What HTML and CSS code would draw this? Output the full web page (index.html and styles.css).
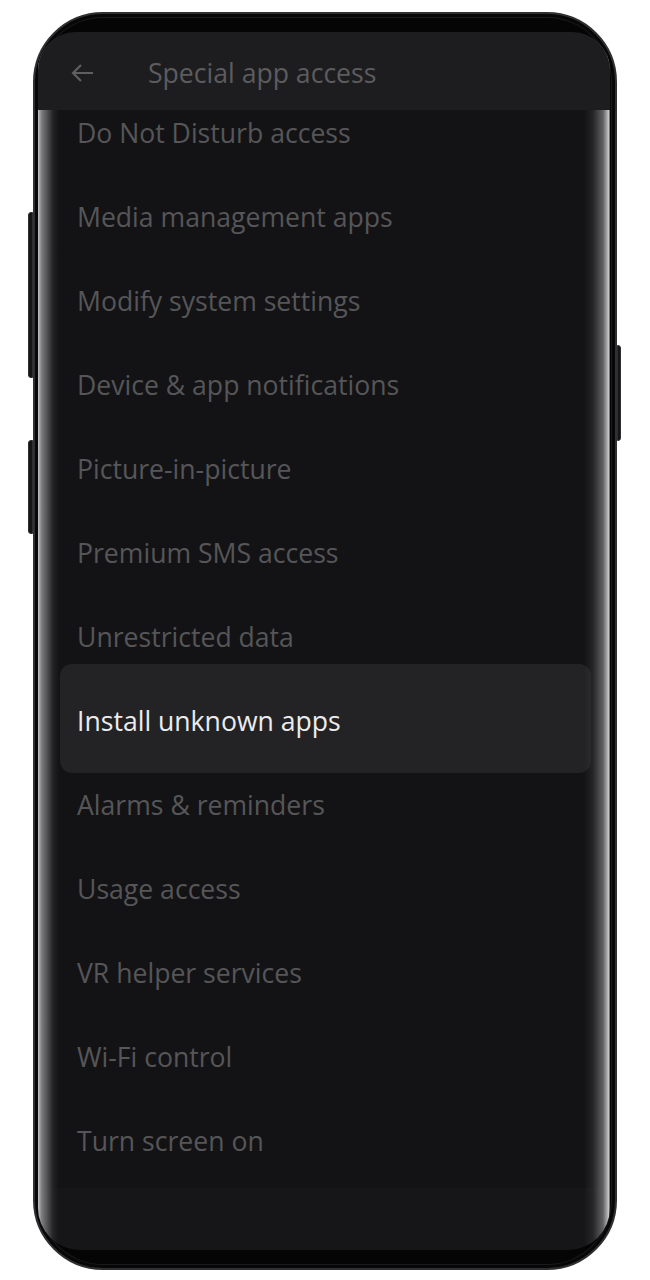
FILE: index.html
```html
<!DOCTYPE html>
<html lang="en">
<head>
<meta charset="utf-8">
<title>Special app access</title>
<link rel="stylesheet" href="styles.css">
</head>
<body>
<div class="stage">
  <div class="phone">
    <span class="btn btn-l1"></span>
    <span class="btn btn-l2"></span>
    <span class="btn btn-r1"></span>
    <div class="screen">
      <header class="appbar">
        <svg class="back" width="24" height="20" viewBox="0 0 24 20" aria-hidden="true">
          <path d="M22 10H2.5M10 2L2 10l8 8" fill="none" stroke="#5f5f61" stroke-width="2.2" stroke-linecap="butt" stroke-linejoin="miter"/>
        </svg>
        <h1 class="title">Special app access</h1>
      </header>
      <div class="list-wrap">
        <ul class="list">
          <li class="item"><span>Do Not Disturb access</span></li>
          <li class="item"><span>Media management apps</span></li>
          <li class="item"><span>Modify system settings</span></li>
          <li class="item"><span>Device &amp; app notifications</span></li>
          <li class="item"><span>Picture-in-picture</span></li>
          <li class="item"><span>Premium SMS access</span></li>
          <li class="item"><span>Unrestricted data</span></li>
          <li class="item active"><span>Install unknown apps</span></li>
          <li class="item"><span>Alarms &amp; reminders</span></li>
          <li class="item"><span>Usage access</span></li>
          <li class="item"><span>VR helper services</span></li>
          <li class="item"><span>Wi-Fi control</span></li>
          <li class="item"><span>Turn screen on</span></li>
        </ul>
      </div>
      <div class="navbar"></div>
    </div>
  </div>
</div>
</body>
</html>
```

FILE: styles.css
```css
* { box-sizing: border-box; }

html, body {
  margin: 0;
  padding: 0;
  background: #ffffff;
  font-family: "Open Sans", Roboto, "Liberation Sans", sans-serif;
}

.stage {
  padding: 12px 0 0 33px;
}

.phone {
  position: relative;
  width: 584px;
  height: 1258px;
  border-radius: 70px;
  background: #050505;
  border: 2px solid #303032;
  box-shadow: inset 0 0 0 3px #070707, inset 0 0 0 4px #1a1a1c;
  padding: 18px 5px 18px 3px;
}

.btn {
  position: absolute;
  width: 5px;
  background: #151517;
  border: 1px solid #2e2e30;
}
.btn-l1 { left: -7px; top: 198px; height: 166px; border-radius: 3px 0 0 3px; }
.btn-l2 { left: -7px; top: 426px; height: 94px; border-radius: 3px 0 0 3px; }
.btn-r1 { right: -6px; top: 331px; height: 96px; width: 4px; border-radius: 0 3px 3px 0; }

.screen {
  position: relative;
  height: 100%;
  border-radius: 38px 38px 42px 42px;
  overflow: hidden;
  background: #131315;
  display: flex;
  flex-direction: column;
}

.screen::after {
  content: "";
  position: absolute;
  inset: 0;
  pointer-events: none;
  background: linear-gradient(to right,
    #c4c4c6 0px,
    #9a9a9c 2px,
    #7a7a7c 4px,
    rgba(95,95,97,0.85) 9px,
    rgba(50,50,52,0.5) 15px,
    rgba(20,20,22,0) 21px,
    rgba(20,20,22,0) calc(100% - 26px),
    rgba(55,55,57,0.5) calc(100% - 17px),
    rgba(110,110,112,0.85) calc(100% - 7px),
    #a8a8aa calc(100% - 3px),
    #d0d0d2 calc(100% - 1px),
    #1a1a1a 100%);
}

.appbar {
  height: 78px;
  flex: none;
  background: #1d1d1f;
  display: flex;
  align-items: center;
  padding: 4px 0 0 33px;
  position: relative;
  z-index: 1;
}

.back {
  flex: none;
  display: block;
}

.title {
  margin: 0 0 0 53px;
  font-size: 26.6px;
  font-weight: 400;
  color: #5c5c5e;
  letter-spacing: 0;
}

.list-wrap {
  flex: 1;
  overflow: hidden;
}

.list {
  list-style: none;
  margin: -19px 0 0 0;
  padding: 0;
}

.item {
  position: relative;
  height: 84px;
  display: flex;
  align-items: center;
  padding-left: 39px;
  font-size: 26.6px;
  color: #565658;
}

.item span {
  position: relative;
  z-index: 1;
}

.item.active {
  color: #ececee;
}

.item.active::before {
  content: "";
  position: absolute;
  top: -15px;
  bottom: -10px;
  left: 22px;
  right: 19px;
  border-radius: 12px;
  background: #232326;
}

.navbar {
  height: 62px;
  flex: none;
  background: #161618;
}
```
